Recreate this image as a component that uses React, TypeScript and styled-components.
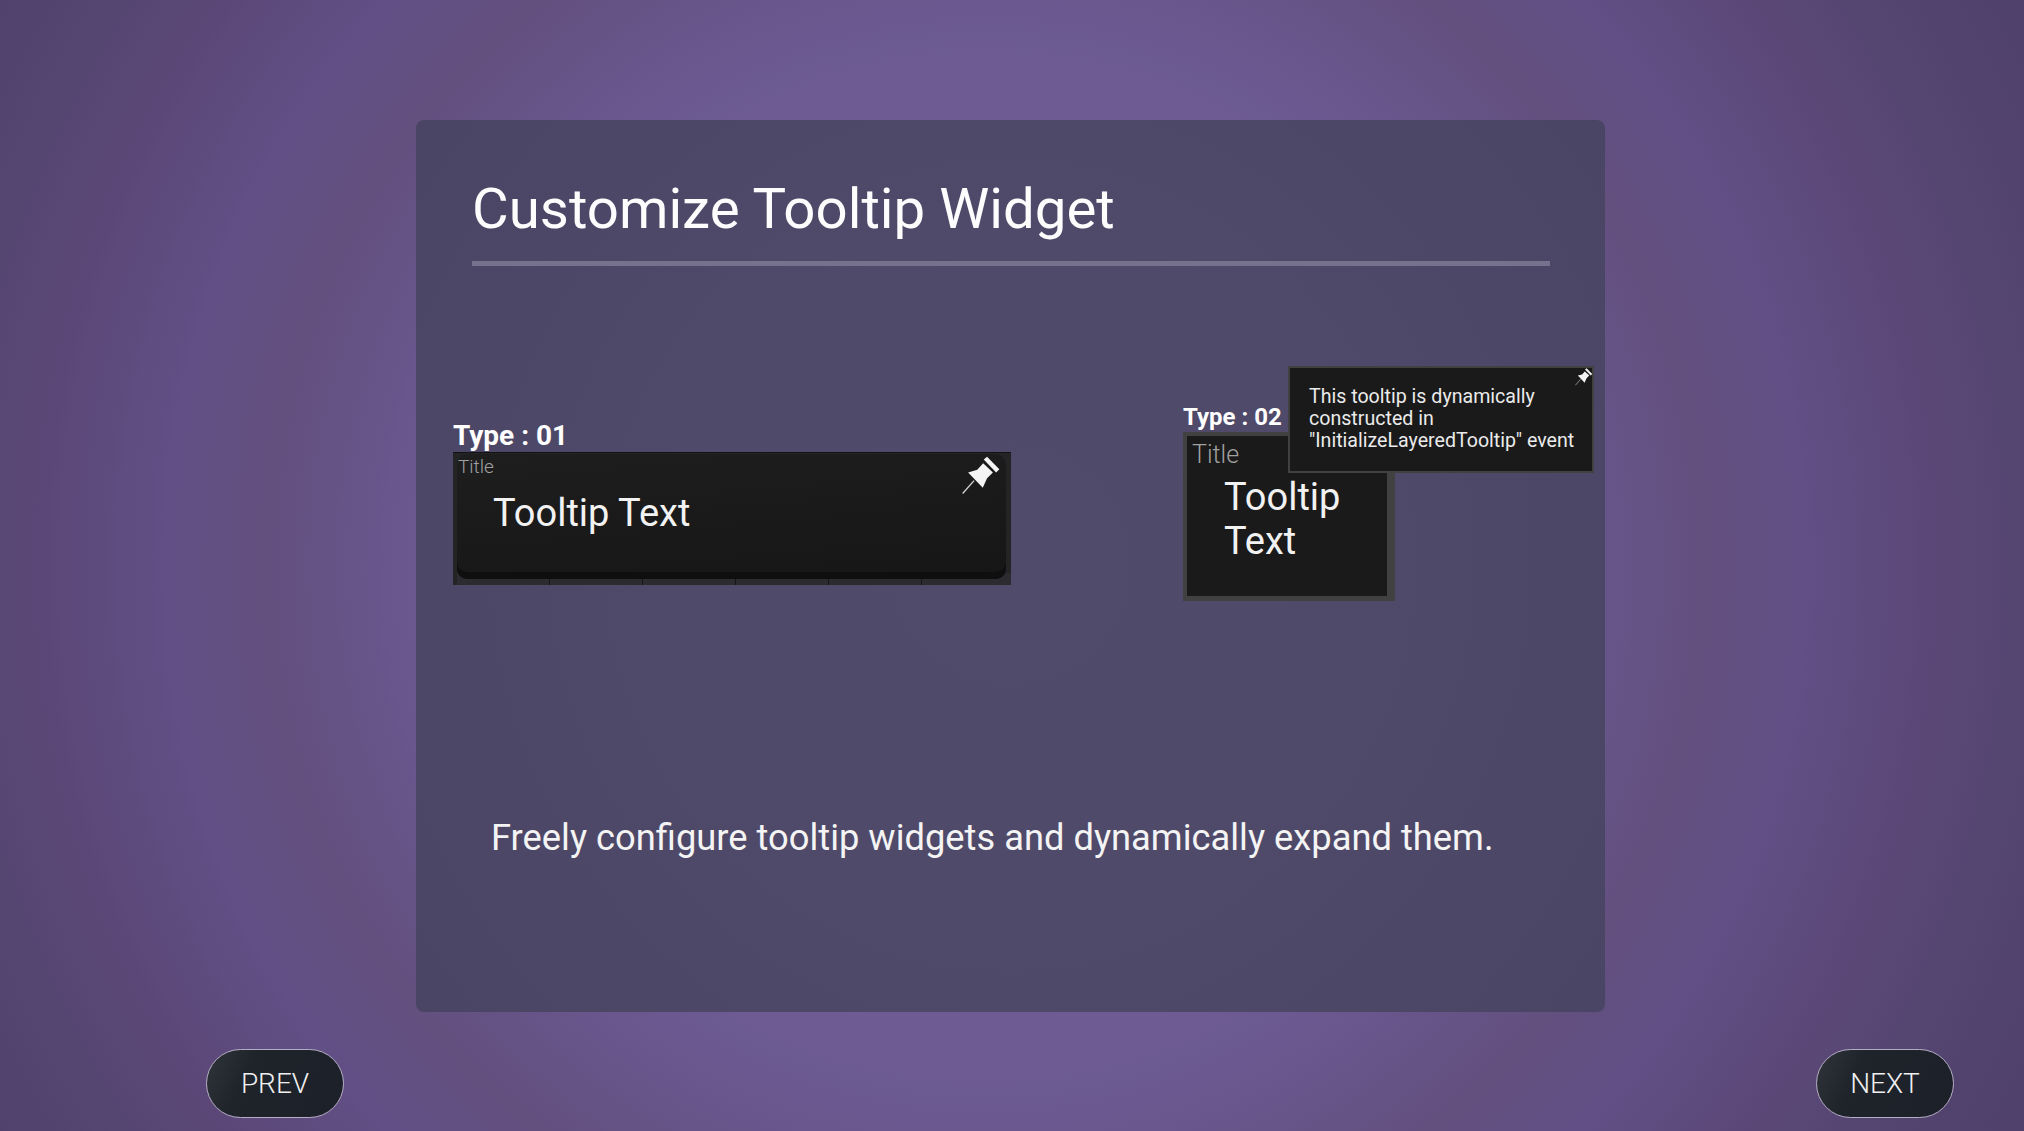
import * as React from 'react';
import styled, { createGlobalStyle } from 'styled-components';

const Global = createGlobalStyle`
  html, body {
    margin: 0;
    padding: 0;
    height: 100%;
    overflow: hidden;
  }
  body {
    font-family: Roboto, "Liberation Sans", sans-serif;
  }
`;

const Screen = styled.div`
  width: 2024px;
  height: 1131px;
  box-sizing: border-box;
  padding: 120px 70px 13px 206px;
  display: flex;
  flex-direction: column;
  justify-content: space-between;
  background: radial-gradient(
    circle at 985px 565px,
    #6f5c96 0,
    #6e5b94 500px,
    #68568c 600px,
    #63507f 720px,
    #614f85 820px,
    #5c4878 940px,
    #554571 1040px,
    #4f416b 1160px
  );
`;

const Panel = styled.section`
  flex: none;
  width: 1189px;
  height: 892px;
  margin-left: 210px;
  box-sizing: border-box;
  padding: 0 55px 0 34px;
  border-radius: 8px;
  color: #fff;
  background: radial-gradient(circle at 595px 445px, #514b6b 0, #504a6a 340px, #4a4464 800px);
`;

const Heading = styled.h1`
  margin: 0 0 0 22px;
  padding-top: 45px;
  height: 88px;
  font-size: 56.4px;
  line-height: 88px;
  font-weight: 400;
  color: #fdfdfd;
  white-space: nowrap;
`;

const Rule = styled.div`
  height: 5px;
  margin: 8px 0 0 22px;
  background: #77718d;
`;

const Examples = styled.div`
  display: flex;
  align-items: flex-start;
`;

const Example = styled.div<{ $top: number; $left: number }>`
  flex: none;
  position: relative;
  margin-top: ${(p) => p.$top}px;
  margin-left: ${(p) => p.$left}px;
`;

const TypeLabel = styled.div<{ $size: number; $gap: number }>`
  font-size: ${(p) => p.$size}px;
  line-height: 30px;
  padding-bottom: ${(p) => p.$gap}px;
  font-weight: 700;
  color: #fff;
  white-space: nowrap;
`;

const WideTooltip = styled.div`
  position: relative;
  width: 558px;
  height: 133px;
  box-sizing: border-box;
  padding: 1px 5px 6px 4px;
  background:
    repeating-linear-gradient(90deg, #2c2c30 0 92px, #161618 92px 93px) 4px 100% / 100% 12px no-repeat,
    linear-gradient(#242427, #242427);
  border-top: 1px solid #121214;
`;

const WideBody = styled.div`
  height: 100%;
  border-radius: 10px;
  box-sizing: border-box;
  background: linear-gradient(175deg, #1e1e1f 0, #161617 100%);
  box-shadow: 0 -7px 0 0 #0f0f10 inset;
`;

const TitleText = styled.div<{ $size: number }>`
  font-size: ${(p) => p.$size}px;
  font-weight: 300;
  color: #a0a0a0;
  white-space: nowrap;
`;

const WideTitle = styled(TitleText)`
  line-height: 22px;
  padding-left: 1px;
  padding-top: 2px;
`;

const MainText = styled.div`
  font-size: 38px;
  line-height: 44px;
  color: #f2f2f2;
`;

const WideText = styled(MainText)`
  padding: 13px 0 0 36px;
`;

const NarrowTooltip = styled.div`
  width: 212px;
  height: 169px;
  box-sizing: border-box;
  padding: 4px 0 0 5px;
  background: #1a1a1a;
  border-style: solid;
  border-color: #414141;
  border-width: 4px 8px 5px 4px;
`;

const NarrowText = styled(MainText)`
  padding: 6px 0 0 32px;
`;

const Layered = styled.div`
  position: absolute;
  left: 105px;
  top: -36px;
  width: 306px;
  height: 107px;
  box-sizing: border-box;
  padding: 18px 10px 0 19px;
  background: #1a1a1a;
  border: 2px solid #414141;
  font-size: 19.6px;
  line-height: 22px;
  color: #ebebeb;
`;

const Pin = styled.svg<{ $size: number; $right: number; $top: number }>`
  position: absolute;
  right: ${(p) => p.$right}px;
  top: ${(p) => p.$top}px;
  width: ${(p) => p.$size}px;
  height: ${(p) => p.$size}px;
`;

const PinIcon = ({ size, right, top }: { size: number; right: number; top: number }) => (
  <Pin $size={size} $right={right} $top={top} viewBox="0 0 40 39">
    <path d="M12.3 24.7L.7 38" stroke="#d8d8d8" strokeWidth="1.3" fill="none" />
    <path d="M22.3 3L25.7.3 38.3 13 35 16.3z" fill="#f4f4f4" />
    <path d="M21.7 7L31.7 16.3 25.7 22.3 21.3 32 6.3 16.3 15.7 13.7z" fill="#f4f4f4" />
  </Pin>
);

const Description = styled.p`
  margin: 215px 0 0;
  padding-left: 41px;
  font-size: 36.3px;
  line-height: 44px;
  color: #f4f4f4;
  white-space: nowrap;
`;

const Nav = styled.div`
  display: flex;
  justify-content: space-between;
`;

const NavButton = styled.button`
  width: 138px;
  height: 69px;
  padding: 0;
  border: 1.5px solid #b5adc4;
  border-radius: 35px;
  background: linear-gradient(115deg, #30343a 0, #1f242b 30%, #1c2029 100%);
  font-family: inherit;
  font-size: 28px;
  font-weight: 300;
  color: #f0f0f0;
`;

export default function App() {
  return (
    <Screen>
      <Global />
      <Panel>
        <Heading>Customize Tooltip Widget</Heading>
        <Rule />
        <Examples>
          <Example $top={155} $left={3}>
            <TypeLabel $size={28} $gap={1}>Type : 01</TypeLabel>
            <WideTooltip>
              <WideBody>
                <WideTitle $size={19}>Title</WideTitle>
                <WideText>Tooltip Text</WideText>
              </WideBody>
              <PinIcon size={39} right={10} top={3} />
            </WideTooltip>
          </Example>
          <Example $top={136} $left={172}>
            <TypeLabel $size={24} $gap={0}>Type : 02</TypeLabel>
            <NarrowTooltip>
              <TitleText $size={25}>Title</TitleText>
              <NarrowText>
                Tooltip
                <br />
                Text
              </NarrowText>
            </NarrowTooltip>
            <Layered>
              This tooltip is dynamically
              <br />
              constructed in
              <br />
              "InitializeLayeredTooltip" event
              <PinIcon size={18} right={-1} top={0} />
            </Layered>
          </Example>
        </Examples>
        <Description>
          Freely configure tooltip widgets and dynamically expand them.
        </Description>
      </Panel>
      <Nav>
        <NavButton>PREV</NavButton>
        <NavButton>NEXT</NavButton>
      </Nav>
    </Screen>
  );
}
